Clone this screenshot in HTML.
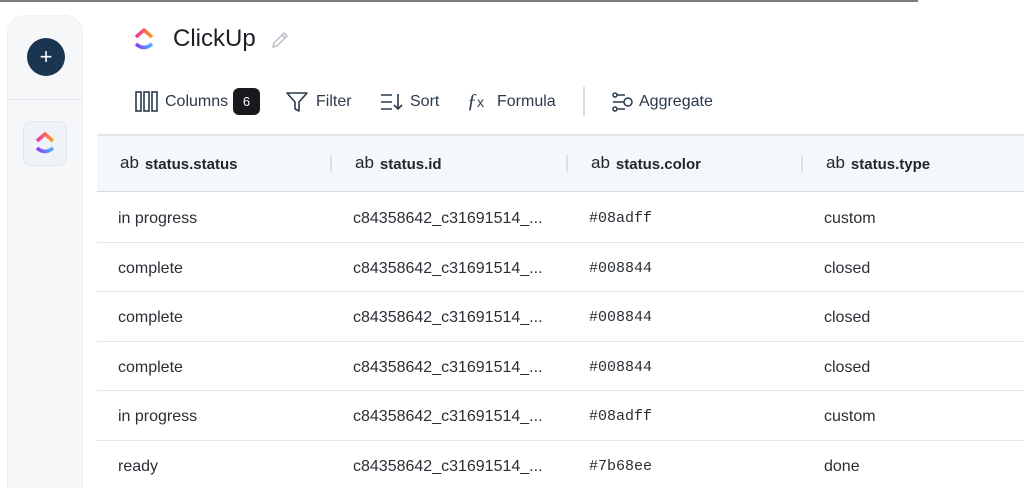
<!DOCTYPE html>
<html><head><style>
*{margin:0;padding:0;box-sizing:border-box}
html,body{width:1024px;height:488px;overflow:hidden}
body{background:#fff;font-family:"Liberation Sans",sans-serif;color:#22272e;position:relative}
.topline{position:absolute;left:0;top:0;width:918px;height:2px;background:#7a7f86}
.side{position:absolute;left:7px;top:15px;width:76px;height:490px;background:#f5f7f9;border-radius:18px;border:1px solid #eef1f4}
.plus{position:absolute;left:27px;top:38px;width:38px;height:38px;border-radius:50%;background:#1b3550;color:#fff;font-size:22px;line-height:37px;text-align:center}
.div{position:absolute;left:7px;top:99px;width:76px;height:1px;background:#e6e9ed}
.lbox{position:absolute;left:23px;top:121px;width:44px;height:45px;border-radius:8px;background:#eff3f8;border:1px solid #e3e8ef}
.title{position:absolute;left:173px;top:25px;font-size:24px;color:#1c2026}
.tb{position:absolute;top:93px;font-size:16px;color:#2a3a4c}
.badge{position:absolute;left:233px;top:88px;width:27px;height:27px;background:#17191c;border-radius:6px;color:#fff;font-size:13px;text-align:center;line-height:27px}
.vsep{position:absolute;left:583px;top:87px;width:2px;height:29px;background:#d6dade}
.thead{position:absolute;left:97px;top:134px;width:927px;height:58px;background:#f5f8fa;border-top:2px solid #e3e6e9;border-bottom:1px solid #d6d9dd}
.th{position:absolute;top:154px;font-size:15px;font-weight:bold;color:#22272e}
.th span{font-weight:normal;font-size:17px;margin-right:6px;position:relative;top:-1px}
.hs{position:absolute;top:155px;width:2px;height:17px;background:#dde1e5}
.row{position:absolute;left:97px;width:927px;height:1px;background:#e4e7ea}
.td{position:absolute;font-size:16px;color:#2a2f35;margin-top:1px}
.mono{font-family:"Liberation Mono",monospace;font-size:15px}
</style></head><body>
<div class="topline"></div>
<div class="side"></div>
<div class="plus">+</div>
<div class="div"></div>
<div class="lbox"></div>
<svg style="position:absolute;left:34px;top:131px" width="22" height="24" viewBox="0 0 22 24"><defs><linearGradient id="a" x1="0" x2="1"><stop offset="0" stop-color="#f0319f"/><stop offset="1" stop-color="#ff9a1f"/></linearGradient><linearGradient id="b" x1="0" x2="1"><stop offset="0" stop-color="#8a3cf5"/><stop offset="1" stop-color="#4fb4ff"/></linearGradient></defs><path d="M3 10 L11 3 L19 10" stroke="url(#a)" stroke-width="3.5" fill="none" stroke-linejoin="round"/><path d="M3 17 Q11 24 19 17" stroke="url(#b)" stroke-width="3.5" fill="none"/></svg>
<svg style="position:absolute;left:133px;top:27px" width="22" height="24" viewBox="0 0 22 24"><path d="M3 10 L11 3 L19 10" stroke="url(#a)" stroke-width="3.5" fill="none" stroke-linejoin="round"/><path d="M3 17 Q11 24 19 17" stroke="url(#b)" stroke-width="3.5" fill="none"/></svg>
<div class="title">ClickUp</div>
<svg style="position:absolute;left:270px;top:30px" width="20" height="20" viewBox="0 0 20 20"><path d="M3 17 L4 13 L14 3 L17 6 L7 16 Z M12 5 L15 8" stroke="#b9bec6" stroke-width="1.5" fill="none"/></svg>
<svg style="position:absolute;left:135px;top:91px" width="23" height="21" viewBox="0 0 23 21"><rect x="1" y="1" width="5" height="19" stroke="#2a3a4c" stroke-width="1.6" fill="none"/><rect x="9" y="1" width="5" height="19" stroke="#2a3a4c" stroke-width="1.6" fill="none"/><rect x="17" y="1" width="5" height="19" stroke="#2a3a4c" stroke-width="1.6" fill="none"/></svg>
<div class="tb" style="left:165px">Columns</div>
<div class="badge">6</div>
<svg style="position:absolute;left:286px;top:91px" width="22" height="22" viewBox="0 0 22 22"><path d="M1 2 H21 L13 11 V20 L9 18 V11 Z" stroke="#2a3a4c" stroke-width="1.6" fill="none" stroke-linejoin="round"/></svg>
<div class="tb" style="left:316px">Filter</div>
<svg style="position:absolute;left:380px;top:93px" width="24" height="18" viewBox="0 0 24 18"><path d="M1 2H12M1 9H12M1 16H12M18 1V16M14 12L18 16L22 12" stroke="#2a3a4c" stroke-width="1.6" fill="none"/></svg>
<div class="tb" style="left:410px">Sort</div>
<div class="tb" style="left:467px;top:90px;font-family:'Liberation Serif',serif;font-style:italic;font-size:20px">ƒ<span style="font-size:14px;font-style:normal;font-family:'Liberation Sans'">x</span></div>
<div class="tb" style="left:497px">Formula</div>
<div class="vsep"></div>
<svg style="position:absolute;left:612px;top:92px" width="22" height="20" viewBox="0 0 22 20"><circle cx="3" cy="3" r="2" stroke="#2a3a4c" stroke-width="1.5" fill="none"/><circle cx="3" cy="17" r="2" stroke="#2a3a4c" stroke-width="1.5" fill="none"/><circle cx="16" cy="10" r="4" stroke="#2a3a4c" stroke-width="1.5" fill="none"/><path d="M5 3H13M5 17H13M1 10H12" stroke="#2a3a4c" stroke-width="1.5"/></svg>
<div class="tb" style="left:639px">Aggregate</div>
<div class="thead"></div>
<div class="th" style="left:120px"><span>ab</span>status.status</div>
<div class="hs" style="left:330px"></div>
<div class="th" style="left:355px"><span>ab</span>status.id</div>
<div class="hs" style="left:566px"></div>
<div class="th" style="left:591px"><span>ab</span>status.color</div>
<div class="hs" style="left:801px"></div>
<div class="th" style="left:826px"><span>ab</span>status.type</div>

<div class="row" style="top:242px"></div>
<div class="row" style="top:291px"></div>
<div class="row" style="top:341px"></div>
<div class="row" style="top:390px"></div>
<div class="row" style="top:440px"></div>

<div class="td" style="left:118px;top:209px">in progress</div><div class="td" style="left:353px;top:209px">c84358642_c31691514_...</div><div class="td mono" style="left:589px;top:209px">#08adff</div><div class="td" style="left:824px;top:209px">custom</div>
<div class="td" style="left:118px;top:259px">complete</div><div class="td" style="left:353px;top:259px">c84358642_c31691514_...</div><div class="td mono" style="left:589px;top:259px">#008844</div><div class="td" style="left:824px;top:259px">closed</div>
<div class="td" style="left:118px;top:308px">complete</div><div class="td" style="left:353px;top:308px">c84358642_c31691514_...</div><div class="td mono" style="left:589px;top:308px">#008844</div><div class="td" style="left:824px;top:308px">closed</div>
<div class="td" style="left:118px;top:358px">complete</div><div class="td" style="left:353px;top:358px">c84358642_c31691514_...</div><div class="td mono" style="left:589px;top:358px">#008844</div><div class="td" style="left:824px;top:358px">closed</div>
<div class="td" style="left:118px;top:407px">in progress</div><div class="td" style="left:353px;top:407px">c84358642_c31691514_...</div><div class="td mono" style="left:589px;top:407px">#08adff</div><div class="td" style="left:824px;top:407px">custom</div>
<div class="td" style="left:118px;top:457px">ready</div><div class="td" style="left:353px;top:457px">c84358642_c31691514_...</div><div class="td mono" style="left:589px;top:457px">#7b68ee</div><div class="td" style="left:824px;top:457px">done</div>
</body></html>
